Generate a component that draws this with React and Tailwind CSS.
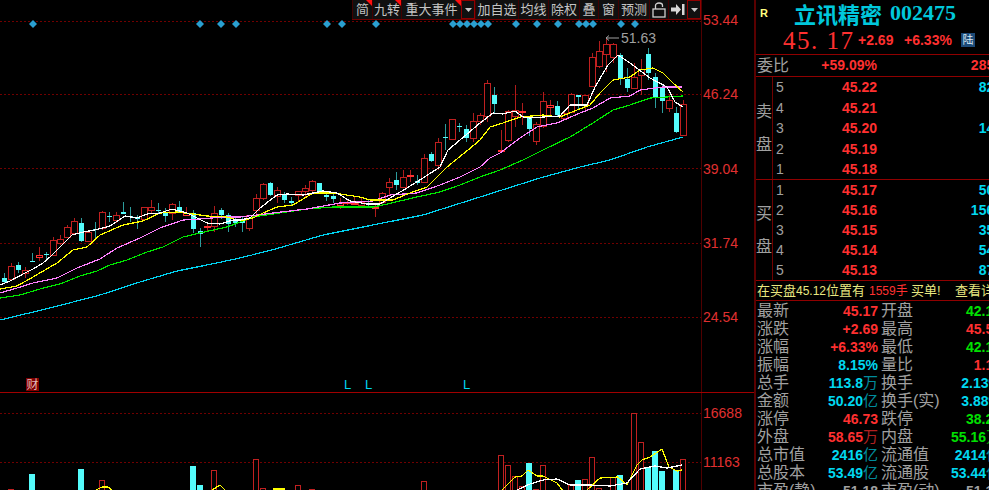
import { Fragment } from "react";

// [type, bodyTop, bodyBottom, high, low] in chart pixels, oldest first
const candles = [
  ["c",278,282,273,283],["r",266,279,263,280],["c",265,270,262,273],["r",270,273,267,278],["c",261,262,253,262],
  ["r",255,257,247,261],["c",254,255,252,260],["r",240,255,237,256],["r",239,243,235,245],["r",227,237,225,238],
  ["r",221,233,218,233],["c",223,241,218,242],["r",232,241,230,242],["c",229,230,222,238],["r",212,228,211,230],
  ["c",216,217,212,222],["r",215,220,212,223],["c",212,214,202,214],["c",216,217,207,222],["c",217,219,215,229],
  ["r",207,219,207,220],["r",207,210,200,214],["c",210,211,203,213],["c",212,216,208,222],["r",204,213,203,220],
  ["c",207,212,201,213],["r",213,215,207,215],["c",213,229,210,233],["c",231,234,228,247],["r",226,227,222,232],
  ["r",213,226,206,232],["c",210,215,208,219],["c",215,224,213,232],["c",220,223,217,227],["c",221,223,217,232],
  ["r",215,228,215,231],["r",198,210,194,215],["r",184,198,183,200],["c",183,195,182,196],["r",190,196,187,203],
  ["c",194,200,192,203],["c",201,203,197,205],["r",191,195,191,202],["r",188,191,185,197],["r",181,190,180,192],
  ["c",183,192,183,193],["c",195,197,192,201],["c",196,199,193,203],["r",203,205,198,209],["r",202,203,199,205],
  ["r",203,204,197,205],["r",202,205,197,207],["c",203,205,200,207],["r",207,208,205,217],["r",193,202,192,205],
  ["r",182,187,178,195],["c",180,185,172,190],["r",177,187,170,188],["r",175,176,170,182],["c",181,183,175,185],
  ["r",158,182,154,183],["c",154,161,152,162],["r",142,165,138,170],["c",137,138,124,150],["r",119,139,119,140],
  ["c",126,127,123,132],["c",129,138,125,142],["r",121,138,113,142],["r",115,121,113,125],["r",83,116,80,122],
  ["c",95,104,87,113],["r",150,151,130,151],["r",111,140,110,142],["r",110,116,85,127],["r",111,112,103,125],
  ["c",118,129,117,136],["r",124,141,122,145],["r",101,126,92,128],["r",105,107,100,115],["c",106,115,101,117],
  ["r",113,118,112,120],["r",94,112,93,113],["c",95,97,95,110],["r",95,105,95,110],["r",57,86,53,87],
  ["r",51,66,41,68],["r",44,54,38,72],["r",44,57,43,63],["c",55,79,53,85],["c",79,88,68,92],
  ["r",77,88,63,88],["r",69,75,59,95],["c",54,73,48,80],["c",77,97,73,108],["c",88,101,85,113],
  ["r",100,108,95,112],["c",113,132,107,133],["r",104,135,100,135],
];

const maLines = [
  { color: "#00d2f0", pts: "0,320 50,308 100,295 140,282 177,271 207,265 240,258 272,250 323,235 373,225 423,215 480,197 540,178 580,167 610,160 647,147 683,137" },
  { color: "#00e600", pts: "0,298 20,295 40,289 60,284 80,276 97,271 110,265 127,260 147,252 163,247 183,237 200,233 227,227 240,222 253,217 273,214 307,209 333,207 373,207 383,205 417,197 440,192 460,185 480,177 500,170 523,160 547,148 570,137 593,123 613,110 630,105 650,98 683,96" },
  { color: "#ff80ff", pts: "0,293 17,288 33,283 57,278 77,268 100,259 117,248 140,238 160,228 183,220 200,219 223,217 240,217 273,213 307,209 340,203 373,201 390,195 417,193 440,185 460,177 480,167 490,158 500,153 520,138 537,127 557,123 580,113 593,108 610,98 630,96 640,90 663,87 682,87" },
  { color: "#ffff00", pts: "0,289 17,286 33,277 57,263 73,250 87,247 100,235 123,225 143,221 160,213 177,212 193,214 207,216 227,217 240,221 253,218 263,213 277,207 293,205 313,193 333,193 360,197 370,200 393,200 410,193 427,187 447,167 468,150 480,140 490,127 503,123 520,117 543,115 560,117 577,110 590,105 600,93 613,80 630,77 640,70 653,68 663,73 673,83 683,92" },
  { color: "#ffffff", pts: "0,285 10,281 25,273 33,269 43,263 50,257 60,247 72,235 83,232 95,230 110,226 125,216 137,218 147,214 160,213 172,209 187,213 197,218 207,223 220,224 233,220 240,220 250,218 260,208 277,195 287,194 303,195 323,191 337,193 350,201 367,204 380,204 390,198 407,188 423,178 440,167 448,150 460,140 480,123 493,113 503,114 515,111 523,117 530,118 543,117 560,116 570,105 587,105 595,87 608,65 618,55 630,63 650,78 667,87 675,102 683,107" },
];

const diamonds = [33,200,221,236,327,342,376,453,460,467,474,481,488,516,537,558,579,586,593,621,635];

// [type, left, top] - bars run off the bottom of the window
const volumes = [
  ["r",8,489],["c",29,474],["c",78,469],["r",99,480],["c",190,466],["c",197,485],["r",211,470],["r",253,459],
  ["r",260,488],["r",295,485],["r",309,489],["r",421,481],["r",498,455],["r",505,465],["r",512,476],["r",519,486],
  ["c",526,463],["r",533,489],["r",540,465],["r",568,485],["c",575,480],["r",582,479],["r",589,457],["r",596,488],
  ["r",610,477],["c",617,475],["r",631,413],["r",638,442],["c",645,467],["c",652,451],["c",659,471],["c",673,470],["r",680,459],
];

const volLines = [
  { color: "#ffff00", pts: "96,490 102,487 108,487 112,490" },
  { color: "#ffff00", pts: "212,490 220,485 225,490" },
  { color: "#ffff00", pts: "273,489 285,489" },
  { color: "#ffff00", pts: "502,490 515,477 522,476 528,470 537,476 543,476 557,483 563,491" },
  { color: "#ffff00", pts: "587,490 600,478 618,477 627,485 637,465 642,460 650,457 662,449 669,467 677,471 682,470" },
  { color: "#ffffff", pts: "517,490 530,484 543,480 557,479 570,485 590,485 610,486 627,483 640,469 655,466 667,468 682,465" },
];

const tools = [
  { label: "简", w: "w-[20px]", flag: true },
  { label: "九转", w: "w-[29px]", flag: true },
  { label: "重大事件", w: "w-[60px]", flag: true },
  { arrow: true, w: "w-[14px]" },
  { label: "加自选", w: "w-[43px]" },
  { label: "均线", w: "w-[30px]" },
  { label: "除权", w: "w-[31px]" },
  { label: "叠", w: "w-[19px]" },
  { label: "窗", w: "w-[20px]" },
  { label: "预测", w: "w-[31px]" },
  { lock: true, w: "w-[19px]" },
  { skip: true, w: "w-[19px]" },
  { arrow: true, w: "w-[14px]" },
];

const sell = [
  ["5", "45.22", "821"],
  ["4", "45.21", ""],
  ["3", "45.20", "143"],
  ["2", "45.19", ""],
  ["1", "45.18", ""],
];
const buy = [
  ["1", "45.17", "501"],
  ["2", "45.16", "1561"],
  ["3", "45.15", "351"],
  ["4", "45.14", "541"],
  ["5", "45.13", "871"],
];

const RED = "text-[#ff3030]";
const CYAN = "text-[#00d8f0]";
const GREEN = "text-[#00e000]";
const GREY = "text-[#a0a0a0]";

const stats = [
  ["最新", "45.17", RED, "", "开盘", "42.17", GREEN, ""],
  ["涨跌", "+2.69", RED, "", "最高", "45.58", RED, ""],
  ["涨幅", "+6.33%", RED, "", "最低", "42.14", GREEN, ""],
  ["振幅", "8.15%", CYAN, "", "量比", "1.12", RED, ""],
  ["总手", "113.8", CYAN, "万", "换手", "2.13%", CYAN, ""],
  ["金额", "50.20", CYAN, "亿", "换手(实)", "3.88%", CYAN, ""],
  ["涨停", "46.73", RED, "", "跌停", "38.23", GREEN, ""],
  ["外盘", "58.65", RED, "万", "内盘", "55.16", GREEN, "万"],
  ["总市值", "2416", CYAN, "亿", "流通值", "2414", CYAN, "亿"],
  ["总股本", "53.49", CYAN, "亿", "流通股", "53.44", CYAN, "亿"],
  ["市盈(静)", "51.18", GREY, "", "市盈(动)", "51.18", GREY, ""],
];

function Suffix({ text, color }) {
  if (!text) return null;
  const tone = color === RED ? "text-[#b02020]" : color === GREEN ? "text-[#00a000]" : "text-[#008c9c]";
  return <span className={`text-[15px] font-normal ${tone}`}>{text}</span>;
}

function Toolbar() {
  return (
    <div className="absolute top-0 right-0 flex h-[20px] border-b border-[#700000] bg-[#101010]">
      {tools.map((t, i) => (
        <div
          key={i}
          className={`relative flex items-center justify-center border-l ${t.w} ${
            t.arrow ? "border border-[#900000]" : "border-[#400000]"
          } text-[13px] text-[#c4c4c4]`}
        >
          {t.label}
          {t.flag && (
            <svg className="absolute top-0 right-0" width="6" height="6">
              <polygon points="0,0 6,0 6,6" fill="#ff1010" />
            </svg>
          )}
          {t.arrow && (
            <svg width="7" height="4">
              <polygon points="0,0 7,0 3.5,4" fill="#c8c8c8" />
            </svg>
          )}
          {t.lock && (
            <svg width="14" height="16" fill="none" stroke="#d0d0d0" strokeWidth="1.3">
              <path d="M3.5 7V3.5C3.5 2 5 1 7 1s3.5 1 3.5 2.5V5" />
              <rect x="1" y="7" width="12" height="8" />
            </svg>
          )}
          {t.skip && (
            <svg width="14" height="11" fill="#d8d8d8">
              <polygon points="0,3.5 5,3.5 5,0 10,5.5 5,11 5,7.5 0,7.5" />
              <rect x="11" y="0" width="2.5" height="11" />
            </svg>
          )}
        </div>
      ))}
    </div>
  );
}

function PriceChart() {
  return (
    <svg width="701" height="392" className="block">
      {[21, 94, 168, 243, 317].map((y) => (
        <line key={y} x1="0" x2="701" y1={y + 0.5} y2={y + 0.5} stroke="#700000" strokeDasharray="2 2" />
      ))}
      {diamonds.map((x) => (
        <polygon key={x} points={`${x - 4},24 ${x},20 ${x + 4},24 ${x},28`} fill="#2a9fd0" />
      ))}
      {candles.map(([type, top, bottom, high, low], i) => {
        const cx = 4 + 7 * i;
        const x = cx + 0.5;
        if (type === "c") {
          return (
            <Fragment key={i}>
              <line x1={x} x2={x} y1={high} y2={low} stroke="#2c9c9c" />
              <rect x={cx - 2} y={top} width="5" height={Math.max(bottom - top, 1)} fill="#54fcfc" />
            </Fragment>
          );
        }
        return (
          <Fragment key={i}>
            <line x1={x} x2={x} y1={high} y2={top} stroke="#b01c1c" />
            <line x1={x} x2={x} y1={bottom} y2={low} stroke="#b01c1c" />
            <rect x={cx - 2.5} y={top + 0.5} width="6" height={Math.max(bottom - top, 1)} fill="#000" stroke={bottom - top < 3 ? "#ff3232" : "#c02020"} />
          </Fragment>
        );
      })}
      {maLines.map((l) => (
        <polyline key={l.color} points={l.pts} fill="none" stroke={l.color} strokeWidth="1.2" shapeRendering="crispEdges" />
      ))}
    </svg>
  );
}

function VolumeChart() {
  return (
    <svg width="701" height="97" viewBox="0 393 701 97" className="block">
      {[413, 462].map((y) => (
        <line key={y} x1="0" x2="701" y1={y + 0.5} y2={y + 0.5} stroke="#700000" strokeDasharray="2 2" />
      ))}
      {volumes.map(([type, x, top]) =>
        type === "c" ? (
          <rect key={x} x={x} y={top} width="6" height={500 - top} fill="#54fcfc" />
        ) : (
          <rect key={x} x={x + 0.5} y={top + 0.5} width="5" height={500 - top} fill="#000" stroke="#c02020" />
        )
      )}
      {volLines.map((l) => (
        <polyline key={l.pts} points={l.pts} fill="none" stroke={l.color} strokeWidth="1.2" shapeRendering="crispEdges" />
      ))}
    </svg>
  );
}

function QuoteRows({ rows }) {
  return (
    <div className="flex-1 flex flex-col justify-between">
      {rows.map(([level, price, vol]) => (
        <div key={level} className="flex h-[20px] items-center text-[14px] leading-none">
          <span className={`w-[14px] shrink-0 pl-[3px] ${GREY}`}>{level}</span>
          <span className={`w-[90px] shrink-0 text-right font-bold ${RED}`}>{price}</span>
          <span className={`w-[125px] shrink-0 text-right font-bold ${CYAN}`}>{vol}</span>
        </div>
      ))}
    </div>
  );
}

function SideLabel({ text }) {
  return (
    <div className="w-[17px] shrink-0 flex flex-col justify-center gap-[17px] border-r border-[#700000] text-[16px] leading-[16px] text-[#a0a0a0]">
      {text.map((c) => (
        <span key={c}>{c}</span>
      ))}
    </div>
  );
}

function QuotePanel() {
  return (
    <div className="w-[235px] shrink-0 border-l-2 border-[#5a0000] overflow-hidden">
      <div className="flex h-[26px] items-center whitespace-nowrap">
        <span className="w-[38px] shrink-0 pl-[4px] text-[11px] font-bold text-[#ffff80]">R</span>
        <span className="text-[22px] leading-none font-bold text-[#00c8dc] font-['Noto_Sans_CJK_SC',sans-serif]">立讯精密</span>
        <span className="ml-[8px] text-[22px] leading-none font-bold text-[#00c8dc] font-['Liberation_Serif',serif]">002475</span>
      </div>
      <div className={`flex h-[29px] items-center border-b border-[#900000] whitespace-nowrap ${RED}`}>
        <span className="ml-[27px] w-[75px] shrink-0 text-[25px] leading-none tracking-[1.5px] font-['Liberation_Serif',serif]">45. 17</span>
        <span className="text-[14px] w-[46px] shrink-0 font-bold">+2.69</span>
        <span className="text-[14px] w-[57px] shrink-0 font-bold">+6.33%</span>
        <span className="flex h-[14px] w-[14px] shrink-0 items-center justify-center bg-[#1c4a78] text-[11px] text-[#d8e8f0]">陆</span>
      </div>
      <div className="flex h-[22px] items-center border-b border-[#900000] whitespace-nowrap">
        <span className={`w-[48px] shrink-0 pl-[1px] text-[16px] ${GREY}`}>委比</span>
        <span className={`w-[73px] shrink-0 text-right text-[14px] font-bold ${RED}`}>+59.09%</span>
        <span className={`w-[125px] shrink-0 text-right text-[14px] font-bold ${RED}`}>2851</span>
      </div>
      <div className="flex h-[103px] border-b border-[#900000]">
        <SideLabel text={["卖", "盘"]} />
        <QuoteRows rows={sell} />
      </div>
      <div className="flex h-[101px] border-b border-[#900000]">
        <SideLabel text={["买", "盘"]} />
        <QuoteRows rows={buy} />
      </div>
      <div className="flex h-[20px] items-center border-b border-[#900000] pl-[1px] text-[13px] text-[#e8e880] whitespace-nowrap">
        <span className="w-[112px] shrink-0">在买盘<span className="text-[12px]">45.12</span>位置有</span>
        <span className={`w-[42px] shrink-0 text-[12px] ${RED}`}>1559手</span>
        <span className="w-[44px] shrink-0">买单!</span>
        <span>查看详情</span>
      </div>
      <div className="pt-[1px]">
        {stats.map(([l1, v1, c1, s1, l2, v2, c2, s2]) => (
          <div key={l1} className="flex h-[18px] w-[260px] items-center whitespace-nowrap pl-[1px]">
            <span className={`w-[48px] shrink-0 text-[16px] leading-[18px] ${GREY}`}>{l1}</span>
            <span className={`w-[73px] shrink-0 text-right text-[14px] leading-[18px] font-bold ${c1}`}>
              {v1}
              <Suffix text={s1} color={c1} />
            </span>
            <span className={`ml-[3px] w-[56px] shrink-0 text-[16px] leading-[18px] ${GREY}`}>{l2}</span>
            <span className={`w-[64px] shrink-0 text-right text-[14px] leading-[18px] font-bold ${c2}`}>
              {v2}
              <Suffix text={s2} color={c2} />
            </span>
          </div>
        ))}
      </div>
    </div>
  );
}

export default function App() {
  return (
    <div className="flex h-[490px] w-[989px] overflow-hidden bg-black font-['Liberation_Sans','Noto_Sans_CJK_SC',sans-serif]">
      <div className="w-[754px] shrink-0">
        {/* K line pane */}
        <div className="flex h-[393px] border-b border-[#a00000]">
          <div className="relative w-[701px]">
            <PriceChart />
            <Toolbar />
            <div className="absolute left-[605px] top-[31px] flex items-center gap-[2px] text-[14px] leading-none text-[#a0a0a0]">
              <svg width="14" height="6" fill="none" stroke="#a0a0a0">
                <path d="M14 3H1M4 0.5L1 3l3 2.5" />
              </svg>
              51.63
            </div>
            <span className="absolute left-[26px] top-[378px] flex h-[13px] w-[13px] items-center justify-center bg-[#800000] text-[12px] leading-none text-[#e0b8b8]">财</span>
            <span className={`absolute left-[344px] top-[377px] text-[13px] leading-[15px] ${CYAN}`}>L</span>
            <span className={`absolute left-[365px] top-[377px] text-[13px] leading-[15px] ${CYAN}`}>L</span>
            <span className={`absolute left-[463px] top-[377px] text-[13px] leading-[15px] ${CYAN}`}>L</span>
          </div>
          <div className="flex-1 border-l border-[#500000] pl-[1px] pt-[11px] text-[14px] leading-[18px] text-[#e03030]">
            {["53.44", "46.24", "39.04", "31.74", "24.54"].map((v) => (
              <div key={v} className="h-[74.25px]">{v}</div>
            ))}
          </div>
        </div>
        {/* volume pane */}
        <div className="flex h-[97px]">
          <div className="w-[701px]">
            <VolumeChart />
          </div>
          <div className="flex-1 border-l border-[#500000] pl-[1px] pt-[11px] text-[14px] leading-[18px] text-[#e03030]">
            {["16688", "11163"].map((v) => (
              <div key={v} className="h-[49px]">{v}</div>
            ))}
          </div>
        </div>
      </div>
      <QuotePanel />
    </div>
  );
}
